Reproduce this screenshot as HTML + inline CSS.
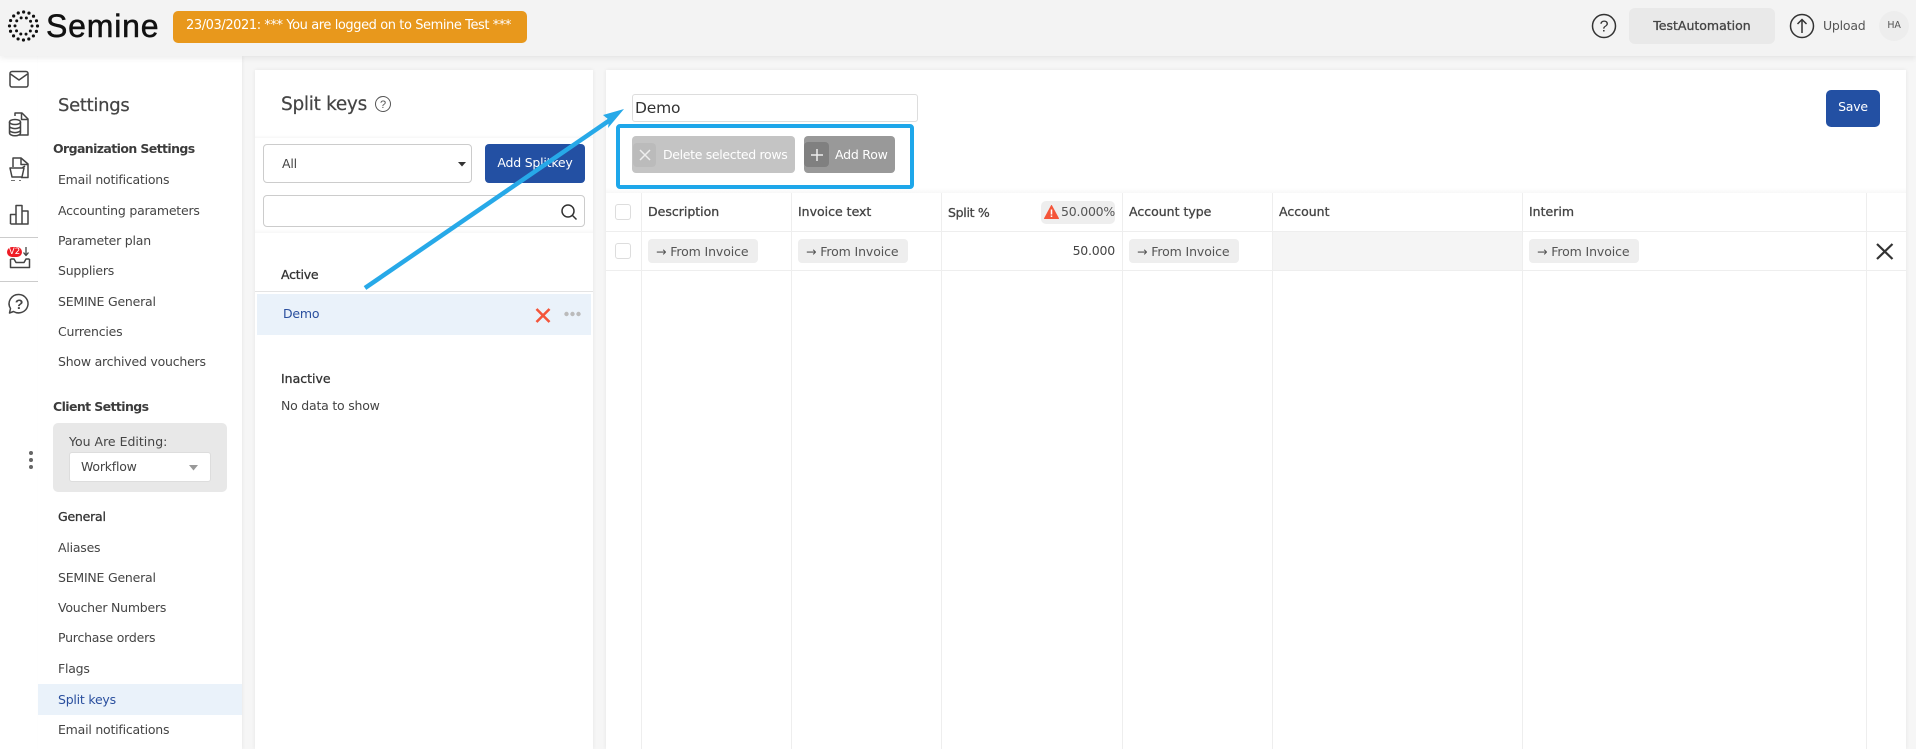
<!DOCTYPE html>
<html><head><meta charset="utf-8"><title>Split keys</title>
<style>
html,body{margin:0;padding:0;width:1916px;height:749px;overflow:hidden;background:#f6f6f6}
body{position:relative;font-family:"DejaVu Sans","Liberation Sans",sans-serif;font-size:12.5px;color:#444;letter-spacing:-.22px}
.a,.t{position:absolute;box-sizing:border-box}
.t{height:20px;line-height:20px;white-space:nowrap;margin-top:-10px}
.b{font-weight:700;letter-spacing:-.6px;color:#3c3c3c}
.s{-webkit-text-stroke:.3px currentColor;letter-spacing:0}
.chip{position:absolute;box-sizing:border-box;top:239px;height:24px;width:110px;background:#eee;border-radius:4px;line-height:25px;padding-left:8px;white-space:nowrap;color:#555;letter-spacing:-.12px}
.v{position:absolute;top:193px;bottom:0;width:1px;background:#eee}
.h{position:absolute;left:606px;width:1300px;height:1px;background:#eee}
.cb{position:absolute;left:615px;width:16px;height:16px;border:1px solid #ddd;border-radius:3px;background:#fff;box-sizing:border-box}
svg{position:absolute;overflow:visible}
</style></head><body>

<!-- header -->
<div class="a" style="left:0;top:0;width:1916px;height:56px;background:#f3f3f3;box-shadow:0 2px 6px rgba(0,0,0,.08);z-index:2">
<svg style="left:0;top:0" width="60" height="56" fill="none" stroke="#111" stroke-linecap="round">
<circle cx="23.5" cy="26" r="14" stroke-width="3.2" stroke-dasharray="0 5.5"/>
<circle cx="23.5" cy="26" r="8.5" stroke-width="3" stroke-dasharray="0 5.34"/>
</svg>
<div class="t" style="left:46px;top:26px;font:32px/20px 'Liberation Sans',sans-serif;letter-spacing:.8px;color:#111;-webkit-text-stroke:.5px #111">Semine</div>
<div class="a" style="left:173px;top:11px;width:354px;height:32px;background:#e8981c;border-radius:5px"></div>
<div class="t" style="left:186px;top:26px;color:#fff;font-size:13px;letter-spacing:-.42px">23/03/2021: *** You are logged on to Semine Test ***</div>
<svg style="left:1591px;top:13px" width="26" height="26" fill="none" stroke="#333" stroke-width="1.5"><circle cx="13" cy="13" r="11.5"/><text x="13" y="18.5" text-anchor="middle" stroke="none" fill="#333" font-family="Liberation Sans" font-size="16">?</text></svg>
<div class="a" style="left:1629px;top:8px;width:146px;height:36px;background:#e9e9e9;border-radius:6px"></div>
<div class="t s" style="left:1629px;width:146px;top:26px;text-align:center;font-size:12.5px;color:#444">TestAutomation</div>
<svg style="left:1789px;top:13px" width="26" height="26" fill="none" stroke="#333" stroke-width="1.5"><circle cx="13" cy="13" r="11.5"/><path d="M13 20V6.5M8.5 11 13 6.5l4.500 4.500"/></svg>
<div class="t" style="left:1823px;top:26px;font-size:12.5px;color:#555">Upload</div>
<div class="a" style="left:1879px;top:11px;width:30px;height:30px;border-radius:50%;background:#ededed"></div>
<div class="t" style="left:1879px;width:30px;top:26px;text-align:center;font-size:9.5px;color:#555">HA</div>
</div>

<!-- icon strip -->
<div class="a" style="left:0;top:56px;width:38px;height:693px;background:#fff;box-shadow:1px 0 3px rgba(0,0,0,.07)"></div>
<svg style="left:0;top:0" width="38" height="330" fill="none" stroke="#444" stroke-width="1.5" stroke-linejoin="round">
<rect x="10" y="71.500" width="18" height="15.500" rx="2"/><path d="M10.500 74l8.500 6 8.500-6"/>
<path d="M15 116v-3h7l6 6v16h-9"/><path d="M21.500 113v6.500h6.500"/><ellipse cx="15" cy="122" rx="5.500" ry="2.500"/><path d="M9.500 122v11c0 1.500 2.500 2.800 5.500 2.800s5.500-1.300 5.500-2.800v-11M9.500 126c0 1.500 2.500 2.600 5.500 2.600s5.500-1.100 5.500-2.600M9.500 130c0 1.500 2.500 2.600 5.500 2.600s5.500-1.100 5.500-2.600"/>
<path d="M13 167v-9h8l7 6v13.500h-7"/><path d="M21 158v6.500h7"/><path d="M10 168h14l-2 9h-10zM12 180v1M20 180v1M14 180v1M22 168l3-2"/>
<path d="M10.500 224v-9.500h5.500V224M16 224v-18.500h6V224M22 224v-13h6V224h-17.500"/>
<path d="M10.500 259v8.500h19V259M10.500 259h3.500l2 3.500h8l2-3.500h3.500"/><path d="M26 247v8M23.500 252.500l2.500 3 2.500-3" stroke-width="1.300"/>
<path d="M19 294.500a9.500 9.200 0 1 1-5.500 17l-4 1.500 1-4.500a9.500 9.200 0 0 1 8.500-14z"/>
<path d="M0 237.500h38M0 281.500h38" stroke="#ccc" stroke-width="1"/>
</svg>
<div class="a" style="left:7px;top:247px;width:15px;height:10px;background:#ee1c25;border-radius:5px"></div>
<div class="t" style="left:7px;width:15px;top:252px;text-align:center;color:#fff;font-size:8.5px;letter-spacing:0">V2</div>
<svg style="left:0;top:0" width="38" height="330" fill="none"><text x="19" y="309" text-anchor="middle" fill="#444" font-family="Liberation Sans" font-weight="700" font-size="14">?</text></svg>
<div class="a" style="left:29px;top:451px;width:4px;height:4px;border-radius:50%;background:#666"></div>
<div class="a" style="left:29px;top:458px;width:4px;height:4px;border-radius:50%;background:#666"></div>
<div class="a" style="left:29px;top:465px;width:4px;height:4px;border-radius:50%;background:#666"></div>

<!-- settings nav -->
<div class="a" style="left:38px;top:56px;width:204px;height:693px;background:#fff;box-shadow:1px 0 3px rgba(0,0,0,.05)"></div>
<div class="t" style="left:58px;top:106px;font-size:18px;color:#444;letter-spacing:-.3px;-webkit-text-stroke:.2px #444">Settings</div>
<div class="t b" style="left:53px;top:149px">Organization Settings</div>
<div class="t" style="left:58px;top:180px">Email notifications</div>
<div class="t" style="left:58px;top:211px">Accounting parameters</div>
<div class="t" style="left:58px;top:241px">Parameter plan</div>
<div class="t" style="left:58px;top:271px">Suppliers</div>
<div class="t" style="left:58px;top:302px">SEMINE General</div>
<div class="t" style="left:58px;top:332px">Currencies</div>
<div class="t" style="left:58px;top:362px">Show archived vouchers</div>
<div class="t b" style="left:53px;top:407px">Client Settings</div>
<div class="a" style="left:53px;top:423px;width:174px;height:69px;background:#e8e8e8;border-radius:5px"></div>
<div class="t" style="left:69px;top:442px;letter-spacing:0">You Are Editing:</div>
<div class="a" style="left:69px;top:452px;width:142px;height:30px;background:#fff;border:1px solid #ddd;border-radius:3px"></div>
<div class="t" style="left:81px;top:467px">Workflow</div>
<svg style="left:189px;top:465px" width="10" height="6"><path d="M0 0h9l-4.500 5.500z" fill="#999"/></svg>
<div class="t s" style="left:58px;top:517px;color:#333;letter-spacing:-.22px">General</div>
<div class="t" style="left:58px;top:548px">Aliases</div>
<div class="t" style="left:58px;top:578px">SEMINE General</div>
<div class="t" style="left:58px;top:608px">Voucher Numbers</div>
<div class="t" style="left:58px;top:638px">Purchase orders</div>
<div class="t" style="left:58px;top:669px">Flags</div>
<div class="a" style="left:38px;top:684px;width:204px;height:31px;background:#eaf2fa"></div>
<div class="t" style="left:58px;top:700px;color:#2a4f9e">Split keys</div>
<div class="t" style="left:58px;top:730px">Email notifications</div>

<!-- split keys panel -->
<div class="a" style="left:255px;top:70px;width:338px;height:679px;background:#fff;box-shadow:0 0 4px rgba(0,0,0,.07)"></div>
<div class="a" style="left:255px;top:135px;width:338px;height:3px;background:linear-gradient(#fff,#f7f7f7)"></div>
<div class="a" style="left:255px;top:229px;width:338px;height:4px;background:linear-gradient(#fff,#f7f7f7)"></div>
<div class="t" style="left:281px;top:105px;font-size:18.5px;letter-spacing:-.3px;-webkit-text-stroke:.2px #444">Split keys</div>
<svg style="left:374px;top:95px" width="18" height="18" fill="none" stroke="#555"><circle cx="9" cy="9" r="7.500"/><text x="9" y="13" text-anchor="middle" stroke="none" fill="#555" font-family="Liberation Sans" font-size="11">?</text></svg>
<div class="a" style="left:263px;top:144px;width:209px;height:39px;border:1px solid #ccc;border-radius:4px;background:#fff"></div>
<div class="t" style="left:282px;top:164px">All</div>
<svg style="left:458px;top:162px" width="9" height="5"><path d="M0 0h8L4 4.500z" fill="#333"/></svg>
<div class="a" style="left:485px;top:144px;width:100px;height:39px;background:#2350a3;border-radius:4px"></div>
<div class="t" style="left:485px;width:100px;top:163px;text-align:center;color:#fff">Add Splitkey</div>
<div class="a" style="left:263px;top:195px;width:322px;height:32px;border:1px solid #ccc;border-radius:4px;background:#fff"></div>
<svg style="left:560px;top:203px" width="18" height="18" fill="none" stroke="#333" stroke-width="1.500"><circle cx="8" cy="8" r="6"/><path d="M12.500 12.500 16.500 16.500"/></svg>
<div class="t s" style="left:281px;top:275px;color:#333;letter-spacing:-.22px">Active</div>
<div class="a" style="left:255px;top:291px;width:338px;height:1px;background:#e4e4e4"></div>
<div class="a" style="left:257px;top:294px;width:334px;height:41px;background:#eaf2fa"></div>
<div class="t" style="left:283px;top:314px;color:#2a4f9e">Demo</div>
<svg style="left:535px;top:308px" width="16" height="15" fill="none" stroke="#f4553a" stroke-width="2.600"><path d="M1.500 1 14.500 14M14.500 1 1.500 14"/></svg>
<svg style="left:564px;top:311px" width="17" height="6" fill="#bbb"><circle cx="2.500" cy="3" r="2.200"/><circle cx="8.500" cy="3" r="2.200"/><circle cx="14.500" cy="3" r="2.200"/></svg>
<div class="t s" style="left:281px;top:379px;color:#333">Inactive</div>
<div class="t" style="left:281px;top:406px">No data to show</div>

<!-- editor panel -->
<div class="a" style="left:606px;top:70px;width:1300px;height:679px;background:#fff;box-shadow:0 0 4px rgba(0,0,0,.07)"></div>
<div class="a" style="left:606px;top:188px;width:1300px;height:5px;background:linear-gradient(#fff,#f8f8f8)"></div>
<div class="a" style="left:632px;top:94px;width:286px;height:28px;border:1px solid #ddd;border-radius:3px;background:#fff"></div>
<div class="t" style="left:635px;top:108px;font-size:15.5px;color:#333;letter-spacing:-.2px">Demo</div>
<div class="a" style="left:1826px;top:90px;width:54px;height:37px;background:#2350a3;border-radius:5px"></div>
<div class="t" style="left:1826px;width:54px;top:107px;text-align:center;color:#fff">Save</div>

<div class="a" style="left:632px;top:136px;width:163px;height:37px;background:#c4c4c4;border-radius:4px"></div>
<div class="a" style="left:633px;top:143px;width:23px;height:24px;background:#bbb;border-radius:4px"></div>
<svg style="left:639px;top:149px" width="12" height="12" fill="none" stroke="#eee" stroke-width="1.500"><path d="M1 1l10 10M11 1 1 11"/></svg>
<div class="t" style="left:663px;top:155px;color:#fff;letter-spacing:-.33px">Delete selected rows</div>
<div class="a" style="left:804px;top:136px;width:91px;height:37px;background:#999;border-radius:4px"></div>
<div class="a" style="left:804px;top:142px;width:25px;height:25px;background:#808080;border-radius:4px"></div>
<svg style="left:810px;top:148px" width="14" height="14" fill="none" stroke="#eee" stroke-width="1.500"><path d="M7 1v12M1 7h12"/></svg>
<div class="t" style="left:835px;top:155px;color:#fff">Add Row</div>

<!-- table -->
<div class="a" style="left:1273px;top:232px;width:249px;height:38px;background:#f5f5f5"></div>
<div class="h" style="top:231px"></div><div class="h" style="top:270px"></div>
<div class="v" style="left:641px"></div><div class="v" style="left:791px"></div><div class="v" style="left:941px"></div><div class="v" style="left:1122px"></div><div class="v" style="left:1272px"></div><div class="v" style="left:1522px"></div><div class="v" style="left:1866px"></div>
<div class="cb" style="top:204px"></div><div class="cb" style="top:243px"></div>
<div class="t s" style="left:648px;top:212px">Description</div>
<div class="t s" style="left:798px;top:212px">Invoice text</div>
<div class="t s" style="left:948px;top:213px;letter-spacing:-.3px">Split %</div>
<div class="a" style="left:1041px;top:201px;width:74px;height:23px;background:#eee;border-radius:5px"></div>
<svg style="left:1044px;top:205px" width="15" height="14"><path d="M7.500 0.500 14.500 13.500H0.500z" fill="#f4553a" stroke="#f4553a" stroke-linejoin="round"/><path d="M7.500 4.500v5M7.500 10.500v1.500" stroke="#fff" stroke-width="1.500"/></svg>
<div class="t" style="left:1061px;top:212px;color:#555">50.000%</div>
<div class="t s" style="left:1129px;top:212px">Account type</div>
<div class="t s" style="left:1279px;top:212px">Account</div>
<div class="t s" style="left:1529px;top:212px">Interim</div>
<div class="chip" style="left:648px">→ From Invoice</div>
<div class="chip" style="left:798px">→ From Invoice</div>
<div class="t" style="left:1015px;width:100px;top:251px;text-align:right">50.000</div>
<div class="chip" style="left:1129px">→ From Invoice</div>
<div class="chip" style="left:1529px">→ From Invoice</div>
<svg style="left:1876px;top:243px" width="18" height="17" fill="none" stroke="#333" stroke-width="2.200"><path d="M1 1l15.500 15M16.500 1 1 16"/></svg>

<!-- annotation -->
<div class="a" style="left:616px;top:124px;width:298px;height:65px;border:4px solid #1ea7ea;border-radius:4px"></div>
<svg style="left:0;top:0;z-index:5" width="1916" height="749"><path d="M365 288 610 120" stroke="#27a9e8" stroke-width="4.500" fill="none"/><path d="M624 109 603 115 609 120 608 128z" fill="#27a9e8"/></svg>
</body></html>
